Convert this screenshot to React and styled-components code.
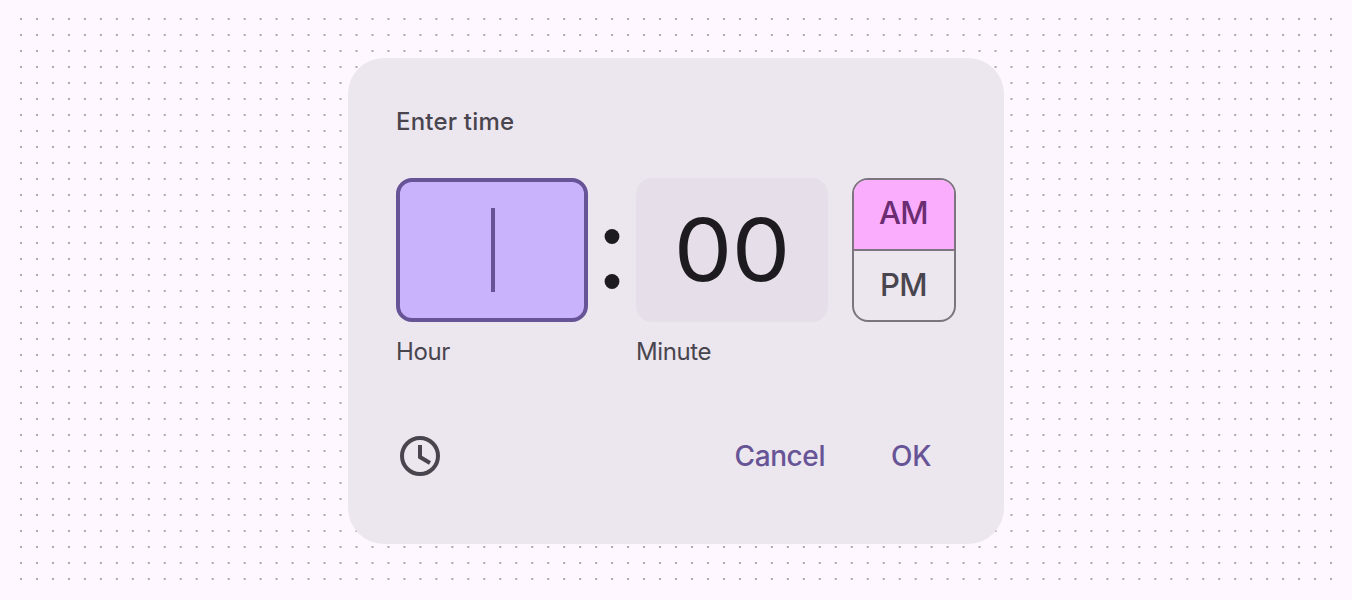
import React, { useState } from "react";
import styled, { createGlobalStyle } from "styled-components";

const GlobalStyle = createGlobalStyle`
  * {
    box-sizing: border-box;
  }
  body {
    margin: 0;
    background-color: #fef7ff;
    font-family: Inter, Roboto, sans-serif;
  }
`;

const Page = styled.main`
  position: relative;
  width: 100%;
  height: 600px;
  padding-top: 58px;
  overflow: hidden;
`;

const Dots = styled.svg`
  position: absolute;
  top: 0;
  left: 0;
`;

const Dialog = styled.section`
  position: relative;
  width: 656px;
  height: 486px;
  margin: 0 auto;
  padding: 48px;
  border-radius: 36px;
  background-color: #ece6ee;
`;

const Title = styled.h1`
  margin: 0;
  height: 32px;
  line-height: 32px;
  font-size: 24px;
  font-weight: 500;
  letter-spacing: 0.2px;
  color: #49454e;
`;

const TimeRow = styled.div`
  display: flex;
  align-items: flex-start;
  margin-top: 40px;
`;

const Field = styled.div`
  width: 192px;
`;

const TimeBox = styled.div`
  height: 144px;
  display: flex;
  justify-content: center;
  align-items: center;
  border: 4px solid ${(props) => (props.$active ? "#675496" : "transparent")};
  border-radius: 16px;
  background-color: ${(props) => (props.$active ? "#c9b3fd" : "#e6dfe9")};
  color: #1d1b20;
`;

const Digits = styled.span`
  font-size: 86px;
  line-height: 1;
  letter-spacing: -0.5px;
  transform: scaleX(1.08);
`;

const Caret = styled.span`
  width: 4px;
  height: 84px;
  margin-left: 2px;
  background-color: #675496;
`;

const Label = styled.p`
  margin: 14px 0 0;
  line-height: 32px;
  font-size: 24px;
  letter-spacing: -0.4px;
  color: #49454e;
`;

const Separator = styled.div`
  width: 48px;
  height: 144px;
  padding-top: 18px;
  display: flex;
  flex-direction: column;
  justify-content: center;
  align-items: center;
  row-gap: 30px;
`;

const Dot = styled.svg`
  width: 16px;
  height: 15px;
  fill: #1d1b20;
`;

const Period = styled.div`
  width: 104px;
  height: 144px;
  margin-left: 24px;
  display: grid;
  grid-template-rows: 69px 71px;
  border: 2px solid #7c757f;
  border-radius: 16px;
  overflow: hidden;
`;

const PeriodButton = styled.button`
  padding: 0 1px 4px 0;
  border: 0;
  font-family: inherit;
  font-size: 31px;
  font-weight: 500;
  line-height: 1;
  letter-spacing: -0.7px;
  color: ${(props) => (props.$selected ? "#6b2c72" : "#49454e")};
  background-color: ${(props) => (props.$selected ? "#fbadfd" : "transparent")};

  & + & {
    padding-bottom: 2px;
    border-top: 2px solid #7c757f;
  }
`;

const Footer = styled.div`
  display: flex;
  align-items: center;
  margin-top: 64px;
  height: 48px;
`;

const Actions = styled.div`
  display: flex;
  margin-left: auto;
  padding-right: 25px;
  column-gap: 66px;
`;

const Action = styled.button`
  padding: 0;
  border: 0;
  background: none;
  font-family: inherit;
  font-size: 28px;
  font-weight: 500;
  line-height: 40px;
  letter-spacing: -0.4px;
  color: #675496;
`;

const columns = Array.from({ length: 83 }, (_, i) => 21 + i * 15.976);

function DotGrid() {
  return (
    <Dots width="1352" height="600" aria-hidden="true">
      {columns.map((x) => (
        <line
          key={x}
          x1={x}
          x2={x}
          y1="18"
          y2="580"
          stroke="#aea8b0"
          strokeWidth="2"
          strokeDasharray="2 14"
        />
      ))}
    </Dots>
  );
}

function ColonDot() {
  return (
    <Dot viewBox="0 0 16 15">
      <circle cx="8" cy="7.5" r="7.4" />
    </Dot>
  );
}

function ClockIcon() {
  return (
    <svg width="48" height="48" viewBox="0 0 48 48" fill="none">
      <circle cx="24" cy="24" r="18" stroke="#49454e" strokeWidth="4" />
      <path d="M24 13V25L34 31" stroke="#49454e" strokeWidth="4" />
    </svg>
  );
}

function App() {
  const [period, setPeriod] = useState("AM");

  return (
    <>
      <GlobalStyle />
      <Page>
        <DotGrid />
        <Dialog>
          <Title>Enter time</Title>
          <TimeRow>
            <Field>
              <TimeBox $active>
                <Caret />
              </TimeBox>
              <Label>Hour</Label>
            </Field>
            <Separator>
              <ColonDot />
              <ColonDot />
            </Separator>
            <Field>
              <TimeBox>
                <Digits>00</Digits>
              </TimeBox>
              <Label>Minute</Label>
            </Field>
            <Period>
              {["AM", "PM"].map((name) => (
                <PeriodButton
                  key={name}
                  $selected={period === name}
                  onClick={() => setPeriod(name)}
                >
                  {name}
                </PeriodButton>
              ))}
            </Period>
          </TimeRow>
          <Footer>
            <ClockIcon />
            <Actions>
              <Action>Cancel</Action>
              <Action>OK</Action>
            </Actions>
          </Footer>
        </Dialog>
      </Page>
    </>
  );
}

export default App;
